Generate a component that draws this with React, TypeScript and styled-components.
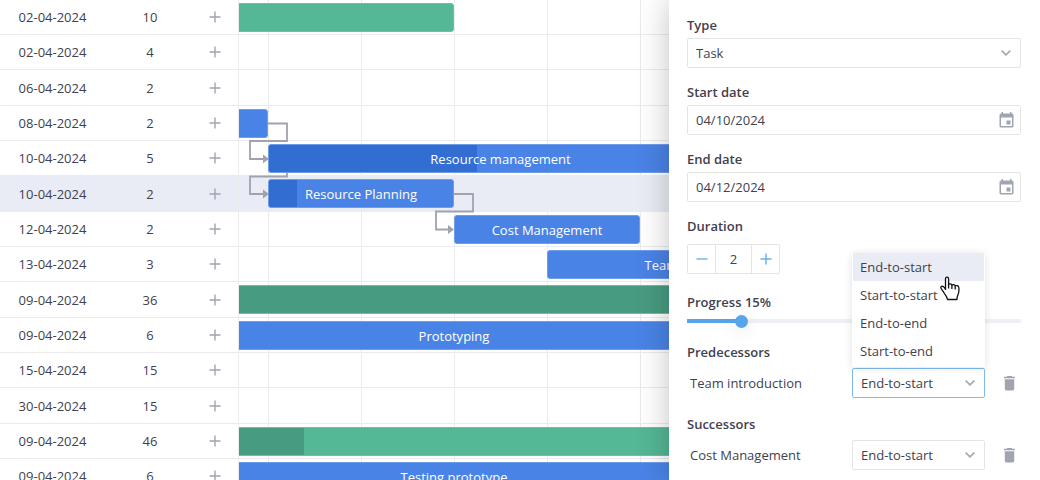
import React from 'react';
import styled, { createGlobalStyle, css } from 'styled-components';

const GlobalStyle = createGlobalStyle`
  *, *::before, *::after { box-sizing: border-box; }
  body {
    margin: 0;
    overflow: hidden;
    background: #fff;
    color: #3f414e;
    font: 400 13px/20px "Open Sans", "Noto Sans", sans-serif;
  }
  button, input, select { font: inherit; color: inherit; }
`;

const LINE = '#ebebeb';
const FIRST_DAY = 2;

type Task = {
  date: string;
  day: number;
  days: number;
  kind?: 'project' | 'task';
  name?: string;
  progress?: number;
  selected?: boolean;
};

const tasks: Task[] = [
  { date: '02-04-2024', day: 2, days: 10, kind: 'project' },
  { date: '02-04-2024', day: 2, days: 4 },
  { date: '06-04-2024', day: 6, days: 2 },
  { date: '08-04-2024', day: 8, days: 2, kind: 'task' },
  { date: '10-04-2024', day: 10, days: 5, kind: 'task', name: 'Resource management', progress: 45 },
  { date: '10-04-2024', day: 10, days: 2, kind: 'task', name: 'Resource Planning', progress: 15, selected: true },
  { date: '12-04-2024', day: 12, days: 2, kind: 'task', name: 'Cost Management' },
  { date: '13-04-2024', day: 13, days: 3, kind: 'task', name: 'Team training' },
  { date: '09-04-2024', day: 9, days: 36, kind: 'project', progress: 50 },
  { date: '09-04-2024', day: 9, days: 6, kind: 'task', name: 'Prototyping' },
  { date: '15-04-2024', day: 15, days: 15 },
  { date: '30-04-2024', day: 30, days: 15 },
  { date: '09-04-2024', day: 9, days: 46, kind: 'project', progress: 3 },
  { date: '09-04-2024', day: 9, days: 6, kind: 'task', name: 'Testing prototype' },
];

const Page = styled.div`
  display: flex;
  height: 100vh;
  overflow: hidden;
`;

const rowSize = css`
  height: 35px;
  &:nth-child(3n) { height: 36px; }
`;

const TaskTable = styled.table`
  flex: none;
  align-self: flex-start;
  width: 239px;
  table-layout: fixed;
  border-spacing: 0;
  border-right: 1px solid ${LINE};
`;

const TableRow = styled.tr<{ $selected?: boolean }>`
  ${rowSize}
  background: ${(p) => (p.$selected ? '#e9ecf4' : '#fff')};
`;

const Cell = styled.td`
  padding: 0;
  border-bottom: 1px solid ${LINE};
  text-align: center;
`;

const DateCell = styled(Cell)`
  width: 105px;
`;

const DaysCell = styled(Cell)`
  width: 90px;
`;

const AddCell = styled(Cell)`
  padding-right: 5px;
`;

const AddButton = styled.button`
  display: grid;
  place-items: center;
  width: 40px;
  height: 24px;
  padding: 0;
  border: 0;
  background: none;
  color: #a1a4b1;
`;

const Chart = styled.section`
  position: relative;
  flex: 1;
  min-width: 0;
  overflow: hidden;
`;

const Timeline = styled.div`
  width: 5115px;
  margin-left: -715px;
  background: repeating-linear-gradient(to right, ${LINE} 0 1px, transparent 1px 93px);
`;

const ChartRow = styled.div<{ $selected?: boolean }>`
  ${rowSize}
  display: grid;
  grid-template-columns: repeat(55, 93px);
  padding-top: 3px;
  border-bottom: 1px solid ${(p) => (p.$selected ? '#e9ecf4' : LINE)};
  background: ${(p) => (p.$selected ? '#e9ecf4' : 'none')};
`;

const Bar = styled.div<{ $kind: 'project' | 'task' }>`
  position: relative;
  height: 29px;
  overflow: hidden;
  border: 1px solid ${(p) => (p.$kind === 'task' ? '#6f9dec' : '#6bc1a3')};
  border-radius: 3px;
  background: ${(p) => (p.$kind === 'task' ? '#4a83e6' : '#54b796')};
  color: #fff;
  line-height: 28px;
  text-align: center;
`;

const Done = styled.div<{ $kind: 'project' | 'task' }>`
  position: absolute;
  inset: 0 auto 0 0;
  background: ${(p) => (p.$kind === 'task' ? '#326dd1' : '#479b80')};
`;

const BarName = styled.span`
  position: relative;
`;

const Links = styled.svg`
  position: absolute;
  top: 0;
  left: 0;
  pointer-events: none;
`;

const Drawer = styled.form`
  position: relative;
  z-index: 2;
  flex: none;
  width: 371px;
  padding: 15px 19px 0 18px;
  background: #fff;
  box-shadow: 0 0 30px rgba(0, 0, 0, 0.24);
`;

const Field = styled.div`
  display: flex;
  flex-direction: column;
  gap: 3px;
  margin-bottom: 14px;
`;

const Label = styled.label`
  font-weight: 600;
`;

const Heading = styled.h2`
  margin: 0;
  font-size: 13px;
  font-weight: 600;
  line-height: 20px;
`;

const Control = styled.div`
  position: relative;
  display: grid;
  align-items: center;
`;

const boxed = css`
  width: 100%;
  height: 30px;
  padding: 0 8px;
  border: 1px solid #e4e4e4;
  border-radius: 2px;
  outline: 0;
  background: #fff;
`;

const TextBox = styled.input`
  ${boxed}
`;

const Select = styled.select<{ $active?: boolean }>`
  ${boxed}
  appearance: none;
  border-color: ${(p) => (p.$active ? '#7fbcf0' : '#e4e4e4')};
`;

const ControlIcon = styled.span<{ $right: number }>`
  position: absolute;
  right: ${(p) => p.$right}px;
  display: flex;
  color: #a1a4b1;
  pointer-events: none;
`;

const Stepper = styled.div`
  display: grid;
  grid-template-columns: 27px 37px 27px;
  width: 93px;
  height: 30px;
  margin-top: 5px;
  border: 1px solid #e4e4e4;
  border-radius: 2px;
`;

const StepButton = styled.button`
  display: grid;
  place-items: center;
  padding: 0;
  border: 0;
  background: none;
  color: #6ab0ec;
`;

const StepValue = styled.input`
  width: 100%;
  min-width: 0;
  padding: 0;
  border: solid #e4e4e4;
  border-width: 0 1px;
  text-align: center;
`;

const Slider = styled.input`
  appearance: none;
  width: 100%;
  height: 14px;
  margin: 0;
  background: linear-gradient(to right, #56a5ea 0 16%, #eff0f5 16%) center / 100% 4px no-repeat;
  &::-webkit-slider-thumb {
    appearance: none;
    width: 13px;
    height: 13px;
    border-radius: 50%;
    background: #56a5ea;
    box-shadow: 0 4px 18px rgba(0, 0, 0, 0.12);
  }
`;

const ProgressField = styled(Field)`
  gap: 2px;
  margin: 18px 0 14px;
`;

const LinkGroup = styled.section`
  display: grid;
  gap: 6px;
  margin-bottom: 16px;
`;

const LinkRow = styled.div`
  display: grid;
  grid-template-columns: 1fr 133px 36px;
  align-items: center;
  padding-left: 3px;
`;

const DeleteButton = styled.button`
  display: grid;
  justify-content: end;
  padding: 0 6px 0 0;
  border: 0;
  background: none;
  color: #a1a4b1;
`;

const Menu = styled.ul`
  position: absolute;
  z-index: 3;
  right: 0;
  bottom: 31px;
  left: 0;
  margin: 0;
  padding: 0 1px 2px;
  border-radius: 2px;
  background: #fff;
  box-shadow: 0 1px 8px rgba(0, 0, 0, 0.12);
  list-style: none;
`;

const Option = styled.li<{ $hover?: boolean }>`
  height: 28px;
  padding: 0 7px;
  background: ${(p) => (p.$hover ? '#e9ecf4' : '#fff')};
  line-height: 28px;
`;

const Pointer = styled.svg`
  position: absolute;
  top: 23px;
  left: 88px;
`;

const Plus = () => (
  <svg width="12" height="12" viewBox="0 0 12 12" fill="none" stroke="currentColor" strokeWidth="1.4">
    <path d="M6 .5v11M.5 6h11" />
  </svg>
);

const Minus = () => (
  <svg width="12" height="12" viewBox="0 0 12 12" fill="none" stroke="currentColor" strokeWidth="1.4">
    <path d="M.5 6h11" />
  </svg>
);

const Chevron = () => (
  <svg width="10" height="6" viewBox="0 0 10 6" fill="none" stroke="currentColor" strokeWidth="1.5">
    <path d="M.7.6 5 4.9 9.3.6" />
  </svg>
);

const Calendar = () => (
  <svg width="15" height="16" viewBox="0 0 15 16" fill="currentColor">
    <path
      fillRule="evenodd"
      d="M2.5 0H4v1.500h7V0h1.500v1.500h.5a1.500 1.500 0 0 1 1.500 1.500v11a1.500 1.500 0 0 1-1.500 1.500H2A1.500 1.500 0 0 1 .5 14V3A1.500 1.500 0 0 1 2 1.500h.5zM2 5.500V14h11V5.500z"
    />
    <path d="M7.500 8.500h4v4h-4z" />
  </svg>
);

const Trash = () => (
  <svg width="11" height="15" viewBox="0 0 11 15" fill="currentColor">
    <path d="M3.400 0h4.200l.8.800H11v1.500H0V.8h2.600zM.8 3.300h9.400v9.500c0 .9-.7 1.600-1.600 1.600H2.400c-.9 0-1.600-.7-1.600-1.600z" />
  </svg>
);

const Hand = () => (
  <Pointer width="22" height="26" viewBox="0 0 22 26" fill="#fff" stroke="#111" strokeWidth="1.3" strokeLinejoin="round">
    <path d="M5.500 14V3c0-2.400 3-2.400 3.100 0v5.500c.5-1 2.800-.9 3.300.6.700-.9 2.800-.7 3.300.8.900-.7 3.300-.4 3.600 1.600.3 2 .2 4.200-.6 6.500-.6 1.500-1.200 3-1.300 5.500H7.500c-.2-2.300-1.700-4-3.200-6.200C3 14.800 1.700 13.600 1 12.200c-.8-1.500 1-2.500 2.300-1.600.9.700 1.500 1.600 2.200 2.600" />
    <path d="M8.600 8v4.500M11.900 9v4M15.200 10v3.500" fill="none" />
  </Pointer>
);

const linkTypes = ['End-to-start', 'Start-to-start', 'End-to-end', 'Start-to-end'];

const LinkEditor = ({ id, title, task, open }: { id: string; title: string; task: string; open?: boolean }) => (
  <LinkGroup>
    <Heading>{title}</Heading>
    <LinkRow>
      <label htmlFor={id}>{task}</label>
      <Control>
        <Select id={id} $active={open} defaultValue="End-to-start">
          {linkTypes.map((t) => (
            <option key={t}>{t}</option>
          ))}
        </Select>
        <ControlIcon $right={10}>
          <Chevron />
        </ControlIcon>
        {open && (
          <Menu>
            {linkTypes.map((t, i) => (
              <Option key={t} $hover={i === 0}>
                {t}
              </Option>
            ))}
            <Hand />
          </Menu>
        )}
      </Control>
      <DeleteButton type="button" aria-label={`Remove ${task}`}>
        <Trash />
      </DeleteButton>
    </LinkRow>
  </LinkGroup>
);

export default function App() {
  return (
    <>
      <GlobalStyle />
      <Page>
        <TaskTable>
          <tbody>
            {tasks.map((t, i) => (
              <TableRow key={i} $selected={t.selected}>
                <DateCell>{t.date}</DateCell>
                <DaysCell>{t.days}</DaysCell>
                <AddCell>
                  <AddButton type="button" aria-label="Add task">
                    <Plus />
                  </AddButton>
                </AddCell>
              </TableRow>
            ))}
          </tbody>
        </TaskTable>

        <Chart>
          <Timeline>
            {tasks.map((t, i) => (
              <ChartRow key={i} $selected={t.selected}>
                {t.kind && (
                  <Bar
                    $kind={t.kind}
                    style={{ gridColumn: `${t.day - FIRST_DAY + 1} / span ${t.days}` }}
                  >
                    {t.progress && <Done $kind={t.kind} style={{ width: `${t.progress}%` }} />}
                    {t.name && <BarName>{t.name}</BarName>}
                  </Bar>
                )}
              </ChartRow>
            ))}
          </Timeline>
          <Links width="250" height="250" fill="none" stroke="#a1a2b0" strokeWidth="1.8">
            <path d="M29 123.500h19V141H11v18h16" />
            <path d="M48 173v3.500H11V194h16" />
            <path d="M215 194h19v17.500h-37v18h16" />
            <path fill="#a1a2b0" stroke="none" d="m24 154.500 6 4.400-6 4.400zM24 189.600l6 4.400-6 4.400zM209 225.100l6 4.400-6 4.400z" />
          </Links>
        </Chart>

        <Drawer>
          <Field>
            <Label htmlFor="type">Type</Label>
            <Control>
              <Select id="type">
                <option>Task</option>
              </Select>
              <ControlIcon $right={10}>
                <Chevron />
              </ControlIcon>
            </Control>
          </Field>
          <Field>
            <Label htmlFor="start">Start date</Label>
            <Control>
              <TextBox id="start" defaultValue="04/10/2024" />
              <ControlIcon $right={7}>
                <Calendar />
              </ControlIcon>
            </Control>
          </Field>
          <Field>
            <Label htmlFor="end">End date</Label>
            <Control>
              <TextBox id="end" defaultValue="04/12/2024" />
              <ControlIcon $right={7}>
                <Calendar />
              </ControlIcon>
            </Control>
          </Field>
          <Field>
            <Label htmlFor="duration">Duration</Label>
            <Stepper>
              <StepButton type="button" aria-label="Decrease">
                <Minus />
              </StepButton>
              <StepValue id="duration" defaultValue="2" />
              <StepButton type="button" aria-label="Increase">
                <Plus />
              </StepButton>
            </Stepper>
          </Field>
          <ProgressField>
            <Label htmlFor="progress">Progress 15%</Label>
            <Slider id="progress" type="range" min="0" max="100" defaultValue="15" />
          </ProgressField>
          <LinkEditor id="pred" title="Predecessors" task="Team introduction" open />
          <LinkEditor id="succ" title="Successors" task="Cost Management" />
        </Drawer>
      </Page>
    </>
  );
}
